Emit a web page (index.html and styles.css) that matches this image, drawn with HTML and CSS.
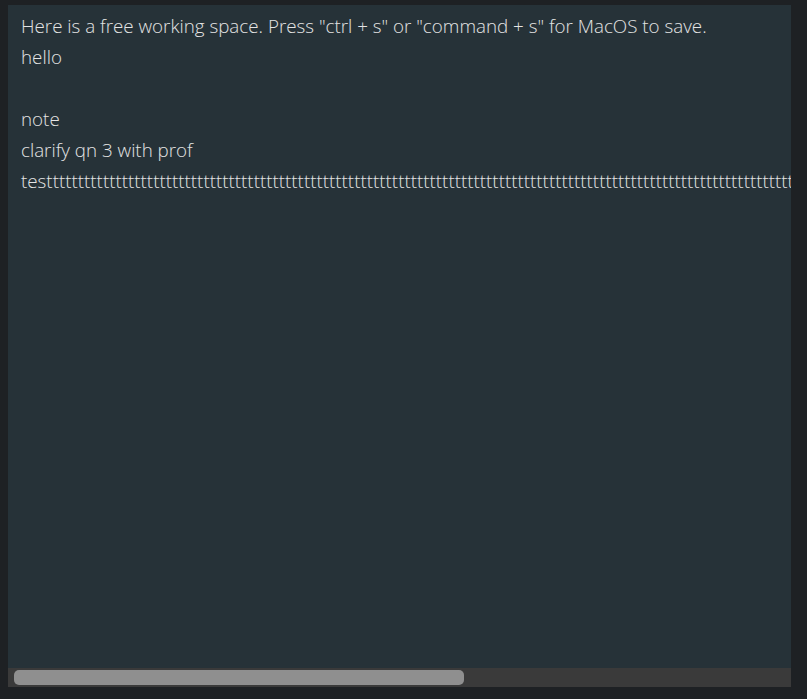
FILE: index.html
```html
<!DOCTYPE html>
<html>
<head>
<meta charset="utf-8">
<link rel="stylesheet" href="styles.css">
</head>
<body>
<div class="frame">
  <div class="editor">
    <div class="lines">
      <div class="line">Here is a free working space. Press "ctrl + s" or "command + s" for MacOS to save.</div>
      <div class="line">hello</div>
      <div class="line">&nbsp;</div>
      <div class="line">note</div>
      <div class="line">clarify qn 3 with prof</div>
      <div class="line">testtttttttttttttttttttttttttttttttttttttttttttttttttttttttttttttttttttttttttttttttttttttttttttttttttttttttttttttttttttttttttttttttttttttttttttttttttttttttttttttttttttttttttttttttttttttt</div>
    </div>
  </div>
  <div class="track"><div class="thumb"></div></div>
</div>
</body>
</html>
```

FILE: styles.css
```css
html, body {
  margin: 0;
  padding: 0;
  background: #1e2124;
  height: 100%;
}
body {
  padding: 5px 16px 0 8px;
  box-sizing: border-box;
}
.frame {
  width: 783px;
  display: flex;
  flex-direction: column;
}
.editor {
  height: 663px;
  background: #263238;
  overflow: hidden;
  padding: 6px 0 0 13px;
  box-sizing: border-box;
}
.lines {
  font-family: "Open Sans", sans-serif;
  font-weight: 300;
  font-size: 18.8px;
  line-height: 31px;
  color: #e4e4e4;
  white-space: nowrap;
}
.track {
  height: 19px;
  background: #3a3a3a;
  padding: 2px 0 0 6px;
  box-sizing: border-box;
}
.thumb {
  width: 450px;
  height: 15px;
  background: #8f8f8f;
  border-radius: 5px;
}
```
